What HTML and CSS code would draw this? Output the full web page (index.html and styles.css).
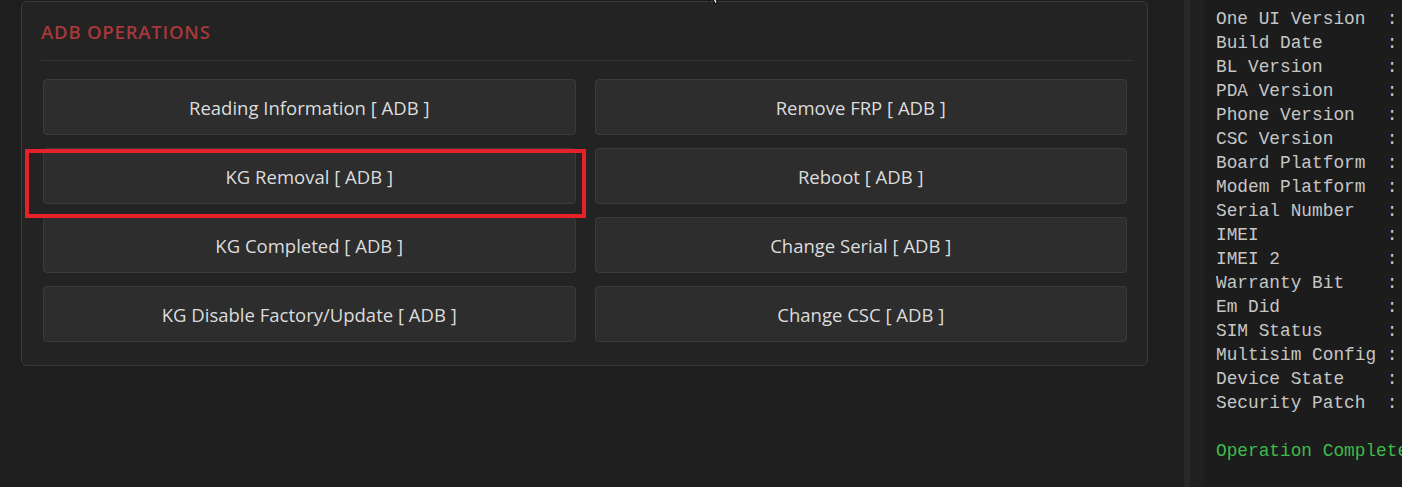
FILE: index.html
```html
<!DOCTYPE html>
<html lang="en">

<head>
    <meta charset="UTF-8">
    <meta name="viewport" content="width=device-width, initial-scale=1.0">
    <title>ADB Operations</title>
    <link rel="stylesheet" href="styles.css">
</head>

<body>
    <div class="screen">
        <main class="workspace">
            <section class="panel">
                <div class="panel-head">
                    <h2 class="panel-title">ADB Operations</h2>
                </div>
                <div class="ops-grid">
                    <button class="op-btn">Reading Information [ ADB ]</button>
                    <button class="op-btn">Remove FRP [ ADB ]</button>
                    <button class="op-btn">KG Removal [ ADB ]</button>
                    <button class="op-btn">Reboot [ ADB ]</button>
                    <button class="op-btn">KG Completed [ ADB ]</button>
                    <button class="op-btn">Change Serial [ ADB ]</button>
                    <button class="op-btn">KG Disable Factory/Update [ ADB ]</button>
                    <button class="op-btn">Change CSC [ ADB ]</button>
                </div>
                <!-- annotation box drawn over the KG Removal button -->
                <div class="highlight"></div>
            </section>
            <svg class="cursor" width="14" height="20" viewBox="0 0 14 20">
                <path d="M1 1 L1 15 L4.5 11.5 L7 17.5 L9.2 16.6 L6.8 10.8 L11.5 10.8 Z" fill="#fff" stroke="#000" stroke-width="1"/>
            </svg>
        </main>

        <div class="splitter"></div>

        <aside class="console">
            <div class="log"><span class="log-head">Device Information ============</span>
One UI Version  :
Build Date      :
BL Version      :
PDA Version     :
Phone Version   :
CSC Version     :
Board Platform  :
Modem Platform  :
Serial Number   :
IMEI            :
IMEI 2          :
Warranty Bit    :
Em Did          :
SIM Status      :
Multisim Config :
Device State    :
Security Patch  :

<span class="log-ok">Operation Completed</span></div>
        </aside>
    </div>
</body>

</html>
```

FILE: styles.css
```css
html,
body {
    margin: 0;
    height: 100%;
    overflow: hidden;
}

* {
    box-sizing: border-box;
}

body {
    background-color: #1e1e1e;
    font-family: "Open Sans", "Noto Sans", sans-serif;
}

.screen {
    display: flex;
    height: 100%;
}

.workspace {
    position: relative;
    width: 1184px;
    flex-shrink: 0;
}

.panel {
    position: relative;
    width: 1127px;
    margin: 1px 0 0 21px;
    padding: 20px 15px 23px 19px;
    border: 1px solid #393939;
    border-radius: 6px;
    background-color: #232323;
}

.panel-head {
    padding-bottom: 18px;
    border-bottom: 1px solid #363636;
}

.panel-title {
    margin: 0;
    font-size: 18.5px;
    line-height: 20px;
    font-weight: 600;
    letter-spacing: 0.8px;
    text-transform: uppercase;
    color: #a8383a;
}

.ops-grid {
    display: grid;
    grid-template-columns: 1fr 1fr;
    column-gap: 19px;
    row-gap: 13px;
    margin: 18px 5px 0 2px;
}

.op-btn {
    height: 56px;
    padding: 0;
    border: 1px solid #3b3b3b;
    border-radius: 4px;
    background-color: #2d2d2d;
    color: #dcdcdc;
    font-family: "Open Sans", "Noto Sans", sans-serif;
    font-size: 18.5px;
    cursor: pointer;
}

.op-btn:hover {
    background-color: #353535;
}

.highlight {
    position: absolute;
    left: 3px;
    top: 147px;
    width: 561px;
    height: 69px;
    border: 4px solid #e8202a;
    pointer-events: none;
}

.cursor {
    position: absolute;
    left: 708px;
    top: -14px;
}

.splitter {
    width: 6px;
    flex-shrink: 0;
    background-color: #282828;
}

.console {
    flex: 1;
    padding-left: 14px;
    background-color: #202020;
    overflow: hidden;
}

.log {
    height: calc(100% + 17px);
    margin-top: -17px;
    padding-left: 12px;
    background-color: #1c1c1c;
    font-family: "Liberation Mono", "DejaVu Sans Mono", monospace;
    font-size: 17.8px;
    line-height: 24px;
    color: #c6c6c6;
    white-space: pre;
}

.log-head {
    color: #4a7fd0;
}

.log-ok {
    color: #3dbb4a;
}
```
